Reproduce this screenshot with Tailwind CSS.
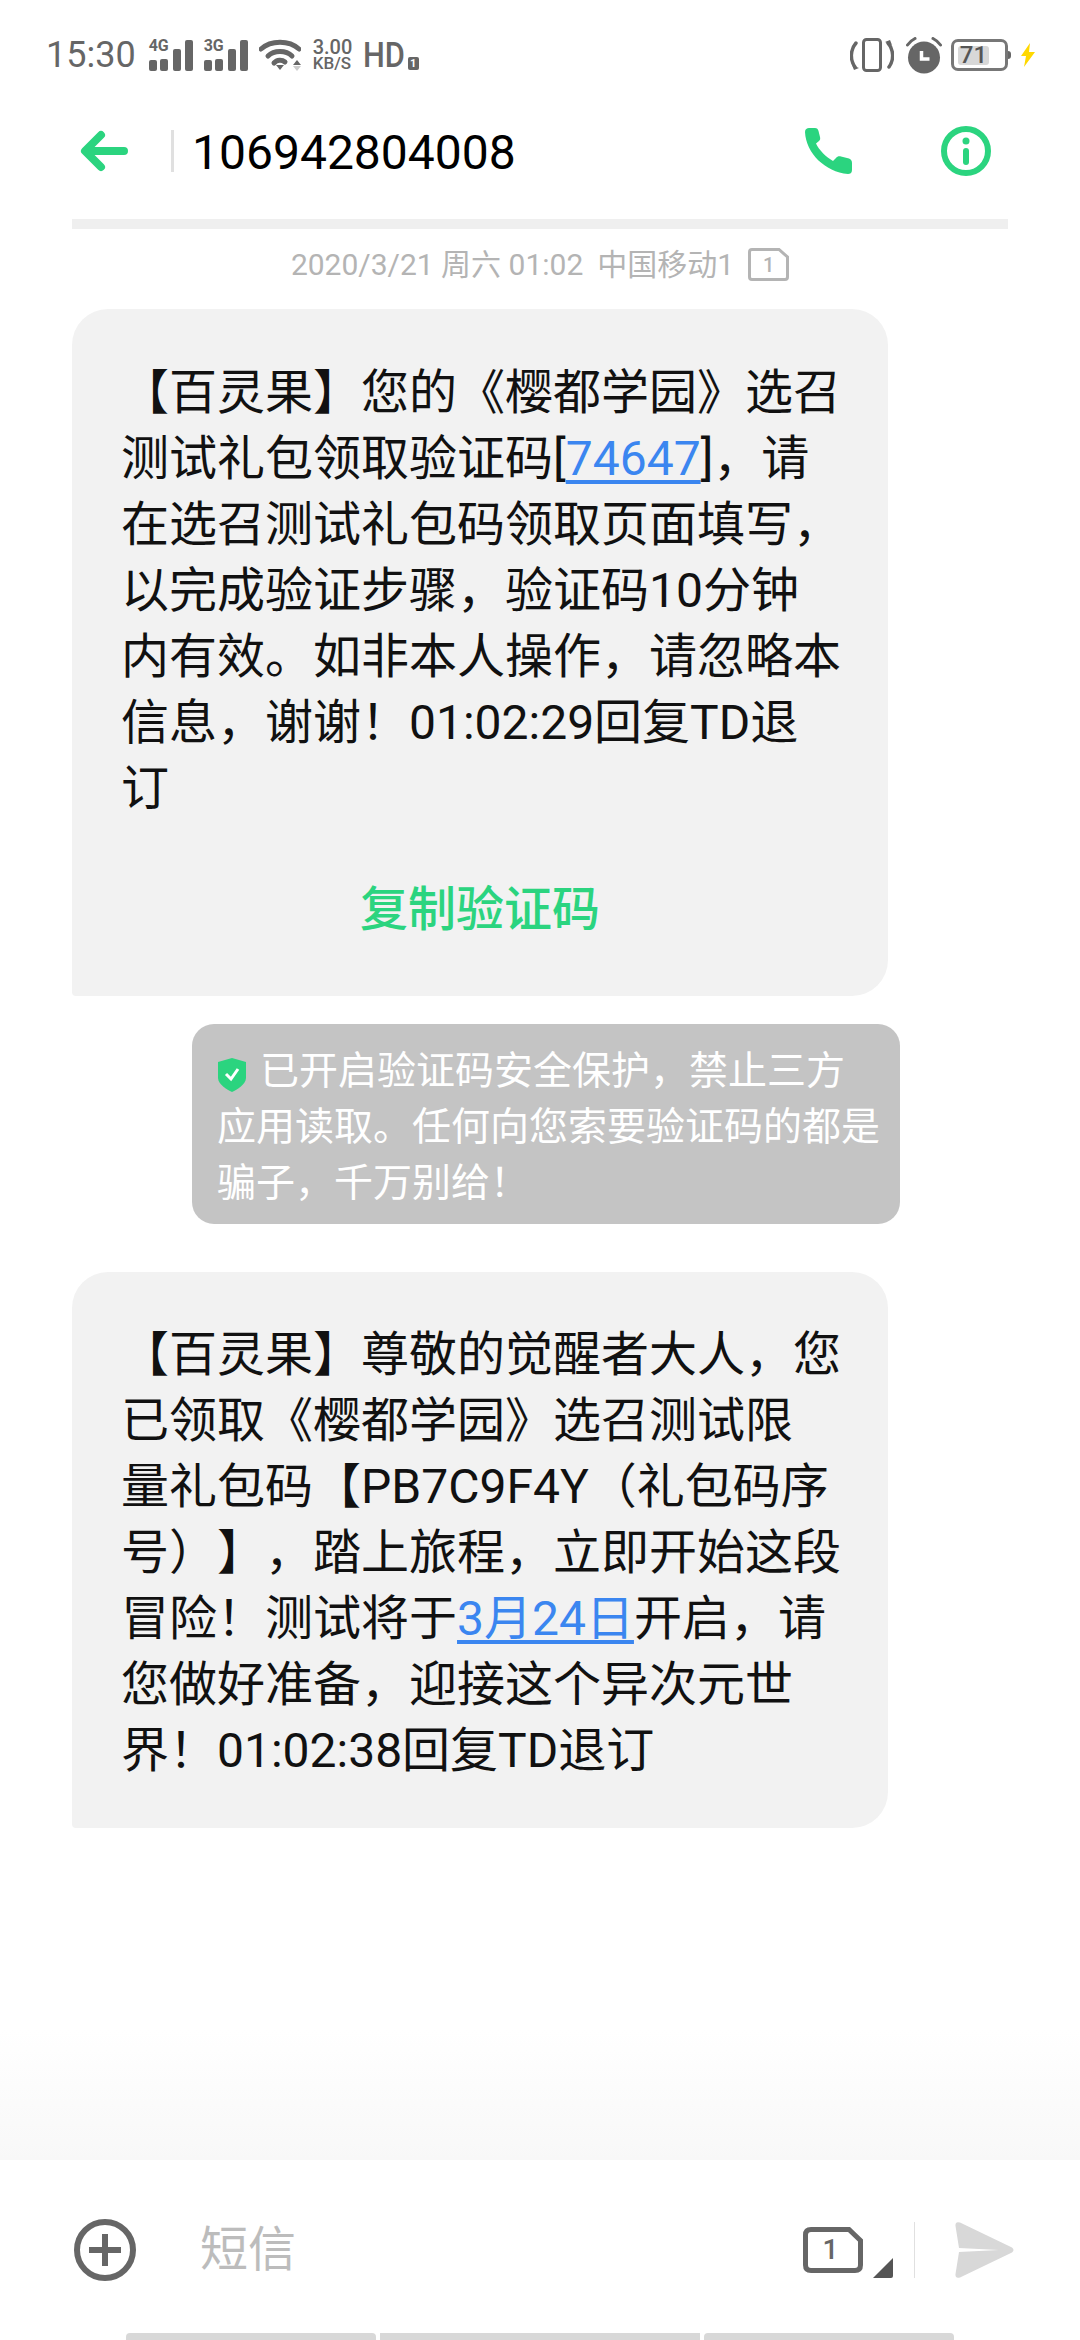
<!DOCTYPE html>
<html lang="zh"><head><meta charset="utf-8">
<script src="https://cdn.jsdelivr.net/npm/@tailwindcss/browser@4"></script>
</head>
<body class="m-0 bg-white">
<div class="relative flex h-[2340px] w-[1080px] flex-col overflow-hidden bg-white font-['Roboto','Noto_Sans_CJK_SC',sans-serif] [text-spacing-trim:space-all]">
  <!-- status bar -->
  <div class="flex h-[110px] shrink-0 items-center justify-between pl-[46px] pr-[44px] text-[#666666]">
    <div class="flex items-center">
      <span class="text-[36px] leading-none">15:30</span>
      <span class="relative ml-[13px] block h-[31px] w-[44px]">
        <span class="absolute left-0 top-[-2px] text-[16px] font-bold leading-none">4G</span>
        <svg class="absolute inset-0" width="44" height="31" viewBox="0 0 44 31" fill="#666"><rect x="0" y="20" width="8" height="11" rx="2"/><rect x="11" y="19" width="8" height="12" rx="2"/><rect x="24" y="9" width="8" height="22" rx="2"/><rect x="36" y="0" width="8" height="31" rx="2"/></svg>
      </span>
      <span class="relative ml-[11px] block h-[31px] w-[44px]">
        <span class="absolute left-0 top-[-2px] text-[16px] font-bold leading-none">3G</span>
        <svg class="absolute inset-0" width="44" height="31" viewBox="0 0 44 31" fill="#666"><rect x="0" y="20" width="8" height="11" rx="2"/><rect x="11" y="19" width="8" height="12" rx="2"/><rect x="24" y="9" width="8" height="22" rx="2"/><rect x="36" y="0" width="8" height="31" rx="2"/></svg>
      </span>
      <svg class="ml-[11px]" width="42" height="32" viewBox="0 0 42 32" fill="none"><path d="M2 10C12 1 30 1 40 10" stroke="#666" stroke-width="5" stroke-linecap="round"/><path d="M9 17C15 11 27 11 33 17" stroke="#666" stroke-width="5" stroke-linecap="round"/><path d="M15 24C18 20.500 23 20.500 26 23" stroke="#666" stroke-width="5" stroke-linecap="round"/><path d="M17 26h8l-4 5z" fill="#666"/><path d="M38 21l4 5h-8z" fill="#666"/><path d="M34 27h8l-4 5z" fill="#ccc"/></svg>
      <div class="ml-[12px] flex w-[40px] flex-col items-start font-medium leading-none"><span class="text-[20px] leading-[17px]">3.00</span><span class="text-[17px] leading-[15px]">KB/S</span></div>
      <span class="ml-[10px] w-[46px] origin-left scale-x-[88%] text-[35px] font-medium leading-none">HD</span>
      <span class="ml-[-1px] mt-[16px] flex h-[13px] w-[11px] items-center justify-center rounded-[2px] bg-[#666] text-[11px] font-bold leading-none text-white">1</span>
    </div>
    <div class="flex items-center">
      <svg width="44" height="34" viewBox="0 0 44 34" fill="none"><rect x="13.500" y="1.500" width="17" height="31" rx="3" stroke="#666" stroke-width="3"/><path d="M6 5C0 12 0 22 5 29M38 5C44 12 44 22 39 29" stroke="#666" stroke-width="3.500" stroke-linecap="round"/><path d="M2 27l7 3-5 2zM42 7l-7-3 5-2z" fill="#666"/></svg>
      <svg class="ml-[12px]" width="36" height="37" viewBox="0 0 36 37"><circle cx="18" cy="20.500" r="16" fill="#666"/><path d="M1.500 8C3.500 5 6 3 9 1.500M34.500 8C32.500 5 30 3 27 1.500" stroke="#666" stroke-width="3" stroke-linecap="round" fill="none"/><path d="M15.500 14v8h8" stroke="#fff" stroke-width="3.500" fill="none"/></svg>
      <div class="relative ml-[9px] flex h-[32px] w-[57px] items-center rounded-[7px] border-[3px] border-[#777] pl-[4px]">
        <span class="flex h-[19px] w-[31px] items-center justify-center rounded-[3px] bg-[#d8d8d8] text-[24px] font-medium leading-none text-[#555]">71</span>
        <span class="absolute right-[-6px] top-[9px] h-[8px] w-[3px] rounded-r bg-[#666]"></span>
      </div>
      <svg class="ml-[12px]" width="16" height="24" viewBox="0 0 16 24" fill="#ffd800"><path d="M10 0L1 13h5l-2 11 11-15h-6z"/></svg>
    </div>
  </div>
  <!-- header -->
  <div class="flex h-[109px] shrink-0 items-center justify-between pb-[27px] pl-[80px] pr-[89px]">
    <div class="flex items-center">
      <svg width="50" height="44" viewBox="0 0 50 44" fill="none"><path d="M21 6L5 22l16 16M6 22h38" stroke="#2bd47f" stroke-width="8" stroke-linecap="round" stroke-linejoin="round"/></svg>
      <span class="ml-[41px] h-[42px] w-[3px] bg-[#e0e0e0]"></span>
      <span class="ml-[18px] mt-[4px] text-[48px] leading-none text-black">106942804008</span>
    </div>
    <div class="flex items-center">
      <svg width="47" height="46" viewBox="0 0 47 46" fill="#2bd47f"><path d="M0 4C0 1 2 0 4 0H10C12 0 13 1 13.500 3L15 9C15.500 11 15 12 14 13L11 15.500C14 22 21 29 28 33L31 30C32 28.500 34 28 36 28.500L44 30.500C46 31 47 33 47 35V42C47 45 45 46 43 46C20 44 1 25 0 4Z"/></svg>
      <svg class="ml-[89px]" width="50" height="50" viewBox="0 0 50 50" fill="none"><circle cx="25" cy="25" r="22" stroke="#2bd47f" stroke-width="6"/><circle cx="25" cy="15" r="3.500" fill="#2bd47f"/><path d="M25 25v11" stroke="#2bd47f" stroke-width="6" stroke-linecap="round"/></svg>
    </div>
  </div>
  <div class="mx-[72px] h-[10px] shrink-0 bg-[#efefef]"></div>
  <!-- date -->
  <div class="flex h-[70px] shrink-0 items-center justify-center pt-[1px] text-[30px] leading-none text-[#b4b4b4]">
    <span>2020/3/21 周六 01:02</span>
    <span class="ml-[14px]">中国移动1</span>
    <span class="relative ml-[14px] flex h-[33px] w-[41px] items-center justify-center">
      <svg class="absolute inset-0" width="41" height="33" viewBox="0 0 41 33" fill="none"><path d="M4 1.500H31L39.500 9V29C39.500 30.500 38.500 31.500 37 31.500H4C2.500 31.500 1.500 30.500 1.500 29V4C1.500 2.500 2.500 1.500 4 1.500Z" stroke="#b4b4b4" stroke-width="3"/></svg>
      <span class="text-[20px] font-medium leading-none">1</span>
    </span>
  </div>
  <!-- messages -->
  <div class="mt-[10px] flex flex-col">
    <div class="ml-[72px] h-[687px] w-[816px] rounded-[36px] rounded-bl-[4px] bg-[#f2f2f2] pl-[49px] pt-[51px] text-[48px] leading-[66px] text-[#111]">
      <p class="whitespace-nowrap">【百灵果】您的《樱都学园》选召<br>测试礼包领取验证码[<span class="text-[#3b86f0] underline underline-offset-[5px]">74647</span>]，请<br>在选召测试礼包码领取页面填写，<br>以完成验证步骤，验证码10分钟<br>内有效。如非本人操作，请忽略本<br>信息，谢谢！01:02:29回复TD退<br>订</p>
      <p class="mt-[55px] pr-[49px] text-center font-medium text-[#2bd47f]">复制验证码</p>
    </div>
    <div class="ml-[192px] mt-[28px] h-[200px] w-[708px] rounded-[22px] bg-[#c4c4c4] pl-[25px] pt-[19px] text-[39px] leading-[56px] text-white">
      <p class="whitespace-nowrap"><svg class="mb-[-2px] mr-[13px] inline-block" width="30" height="34" viewBox="0 0 30 34"><path d="M15 0l14 4v16c0 6-9 12-14 14C10 32 1 26 1 20V4z" fill="#2bd47f"/><path d="M9 16l5 5 7-10" stroke="#fff" stroke-width="3" fill="none"/></svg>已开启验证码安全保护，禁止三方<br>应用读取。任何向您索要验证码的都是<br>骗子，千万别给！</p>
    </div>
    <div class="ml-[72px] mt-[48px] h-[556px] w-[816px] rounded-[36px] rounded-bl-[4px] bg-[#f2f2f2] pl-[49px] pt-[50px] text-[48px] leading-[66px] text-[#111]">
      <p class="whitespace-nowrap">【百灵果】尊敬的觉醒者大人，您<br>已领取《樱都学园》选召测试限<br>量礼包码【PB7C9F4Y（礼包码序<br>号）】，踏上旅程，立即开始这段<br>冒险！测试将于<span class="text-[#3b86f0] underline underline-offset-[5px]">3月24日</span>开启，请<br>您做好准备，迎接这个异次元世<br>界！01:02:38回复TD退订</p>
    </div>
  </div>
  <!-- composer -->
  <div class="absolute bottom-0 left-0 w-full">
    <div class="h-[130px] bg-gradient-to-b from-white to-[#f8f8f8]"></div>
    <div class="flex h-[180px] items-start bg-white pl-[74px] pr-[66px] pt-[59px]">
      <svg width="62" height="62" viewBox="0 0 62 62" fill="none"><circle cx="31" cy="31" r="28" stroke="#666" stroke-width="6"/><path d="M31 15v32M15 31h32" stroke="#666" stroke-width="6"/></svg>
      <span class="ml-[64px] mt-[7px] text-[48px] leading-none text-[#bcbcbc]">短信</span>
      <div class="ml-auto mt-[3px] flex items-start">
        <span class="relative mt-[5px] flex h-[46px] w-[60px] items-center justify-center">
          <svg class="absolute inset-0" width="60" height="46" viewBox="0 0 60 46" fill="none"><path d="M8 2.500H46L57.500 13.500V38C57.500 41.500 55.500 43.500 52 43.500H8C4.500 43.500 2.500 41.500 2.500 38V8C2.500 4.500 4.500 2.500 8 2.500Z" stroke="#666" stroke-width="5"/></svg>
          <span class="mr-[5px] text-[28px] font-medium leading-none text-[#666]">1</span>
        </span>
        <svg class="ml-[10px] mt-[36px]" width="20" height="20" viewBox="0 0 20 20" fill="#555"><path d="M20 0v18a2 2 0 0 1-2 2H0z"/></svg>
        <span class="ml-[21px] h-[56px] w-px bg-[#e0e0e0]"></span>
        <svg class="ml-[40px]" width="59" height="56" viewBox="0 0 59 56" fill="#d8d8d8"><path d="M0.500 4Q0 -1 5 0.500L57 25.500Q60 28 57 30.500L5 55.500Q0 57 0.500 52L4 30L44 28L4 26Z"/></svg>
      </div>
    </div>
    <div class="absolute bottom-0 left-[126px] flex h-[7px] gap-[4px]">
      <span class="w-[250px] rounded-t-[4px] bg-[#d8d8d8]"></span>
      <span class="w-[320px] bg-[#d8d8d8]"></span>
      <span class="w-[250px] rounded-t-[4px] bg-[#d8d8d8]"></span>
    </div>
  </div>
</div>
</body></html>
